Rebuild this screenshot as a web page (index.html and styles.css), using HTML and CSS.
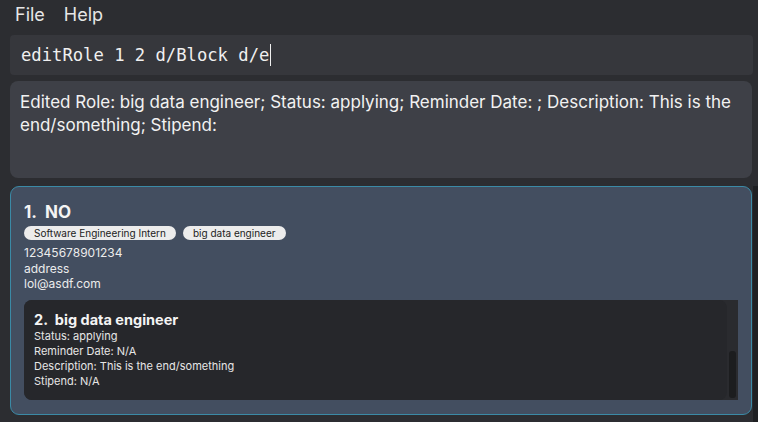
FILE: index.html
```html
<!DOCTYPE html>
<html>
<head>
<meta charset="utf-8">
<link rel="stylesheet" href="styles.css">
</head>
<body>
<div class="app">
  <div class="menubar">
    <span class="menu">File</span>
    <span class="menu">Help</span>
  </div>
  <div class="command"><span class="cmdtext">editRole 1 2 d/Block d/e</span><span class="caret"></span></div>
  <div class="result">Edited Role: big data engineer; Status: applying; Reminder Date: ; Description: This is the end/something; Stipend:</div>
  <div class="listarea">
    <div class="list">
      <div class="card">
        <div class="title">1.&nbsp; NO</div>
        <div class="tags">
          <span class="tag">Software Engineering Intern</span>
          <span class="tag">big data engineer</span>
        </div>
        <div class="field">12345678901234</div>
        <div class="field">address</div>
        <div class="field">lol@asdf.com</div>
        <div class="roles">
          <div class="rolecard">
            <div class="roletitle">2.&nbsp; big data engineer</div>
            <div class="rolefield">Status: applying</div>
            <div class="rolefield">Reminder Date: N/A</div>
            <div class="rolefield">Description: This is the end/something</div>
            <div class="rolefield">Stipend: N/A</div>
          </div>
          <div class="rolescroll"><div class="rolethumb"></div></div>
        </div>
      </div>
    </div>
    <div class="outerscroll"></div>
  </div>
</div>
</body>
</html>
```
FILE: styles.css
```css
html, body {
  margin: 0;
  padding: 0;
  background: #2c2d31;
  width: 758px;
  height: 422px;
  overflow: hidden;
}
.app {
  display: flex;
  flex-direction: column;
  height: 422px;
  font-family: "Inter", "Liberation Sans", sans-serif;
  color: #ececec;
}
.menubar {
  display: flex;
  gap: 19px;
  padding: 3px 0 0 15px;
  height: 32px;
  box-sizing: border-box;
  font-size: 18px;
  line-height: 24px;
  color: #e6e6e6;
}
.command {
  margin: 3px 5px 0 10px;
  height: 40px;
  background: #36373c;
  border-radius: 4px;
  display: flex;
  align-items: center;
  padding-left: 11px;
  font-family: "DejaVu Sans Mono", monospace;
  font-size: 17.2px;
  color: #f0f0f0;
}
.caret {
  display: inline-block;
  width: 1px;
  height: 22px;
  background: #f0f0f0;
  margin-left: 1px;
}
.result {
  margin: 6px 6px 0 10px;
  height: 97px;
  box-sizing: border-box;
  background: #3e4047;
  border-radius: 8px;
  padding: 10px 10px 0 10px;
  font-size: 17px;
  line-height: 23px;
  color: #f2f2f2;
}
.listarea {
  display: flex;
  margin-top: 8px;
  flex: 1;
}
.list {
  flex: 1;
  padding-left: 10px;
}
.outerscroll {
  width: 5px;
  background: #1f2023;
  margin-left: 1px;
}
.card {
  background: #434e60;
  border: 1px solid #3b8aa6;
  border-radius: 9px;
  height: 229px;
  box-sizing: border-box;
  padding: 14px 13px 0 13px;
}
.title {
  font-weight: 700;
  font-size: 17px;
  line-height: 22px;
  color: #f4f4f4;
}
.tags {
  display: flex;
  gap: 7px;
  margin-top: 3px;
}
.tag {
  background: #ececec;
  color: #222;
  font-size: 10px;
  line-height: 14px;
  padding: 0 10px;
  border-radius: 7px;
}
.tags + .field {
  margin-top: 5px;
}
.field {
  font-size: 12px;
  line-height: 15.5px;
  color: #ececec;
}
.roles {
  display: flex;
  margin-top: 8px;
  height: 100px;
  background: #2a2b2f;
  border-radius: 8px 0 0 8px;
}
.rolecard {
  flex: 1;
  background: #26272b;
  border-radius: 8px;
  padding: 10px 10px 0 10px;
}
.rolescroll {
  width: 11px;
  position: relative;
}
.rolethumb {
  position: absolute;
  left: 2px;
  width: 7px;
  top: 51px;
  height: 47px;
  border-radius: 3px;
  background: #1c1d1f;
}
.roletitle {
  font-weight: 700;
  font-size: 14.5px;
  line-height: 19px;
  color: #f4f4f4;
}
.rolefield {
  font-size: 11px;
  line-height: 15px;
  color: #e6e6e6;
}
```
